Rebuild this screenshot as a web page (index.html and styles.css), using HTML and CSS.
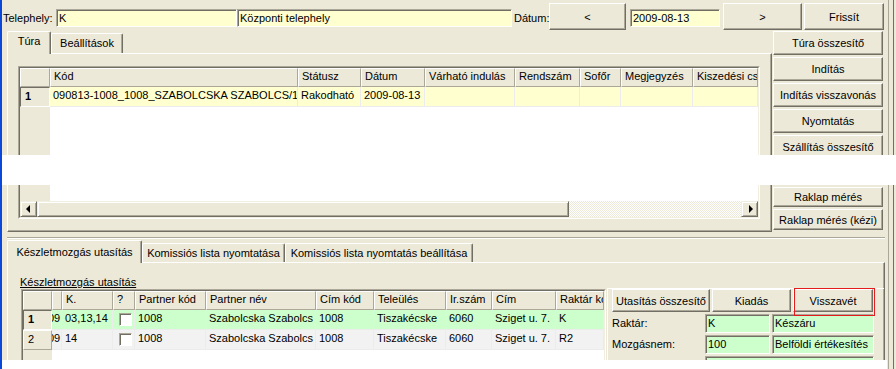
FILE: index.html
```html
<!DOCTYPE html>
<html>

<head>
    <title>Túra kezelés</title>
    <link rel="stylesheet" href="styles.css">
</head>

<body>
    <div class="app">
        <div class="content">

            <div class="topbar">
                <span class="lbl lbl-telephely">Telephely:</span>
                <div class="field yellow w-kod">K</div>
                <div class="field yellow w-nev">Központi telephely</div>
                <span class="lbl lbl-datum">Dátum:</span>
                <div class="btn btn-nav btn-prev">&lt;</div>
                <div class="field yellow w-date">2009-08-13</div>
                <div class="btn btn-nav btn-next">&gt;</div>
                <div class="btn btn-nav btn-refresh">Frissít</div>
            </div>

            <div class="main">
                <div class="left">
                    <div class="tabs">
                        <div class="tab active tab-tura">Túra</div>
                        <div class="tab tab-beall">Beállítások</div>
                    </div>
                    <div class="panel panel-top">
                        <div class="grid grid-tura">
                            <div class="grid-inner">
                                <div class="row head">
                                    <div class="cell t-fix"></div>
                                    <div class="cell t-kod">Kód</div>
                                    <div class="cell t-status">Státusz</div>
                                    <div class="cell t-datum">Dátum</div>
                                    <div class="cell t-indulas">Várható indulás</div>
                                    <div class="cell t-rendszam">Rendszám</div>
                                    <div class="cell t-sofor">Sofőr</div>
                                    <div class="cell t-megj">Megjegyzés</div>
                                    <div class="cell t-kisz">Kiszedési csoport</div>
                                </div>
                                <div class="row data yellow">
                                    <div class="cell fix current t-fix">1</div>
                                    <div class="cell t-kod">090813-1008_1008_SZABOLCSKA SZABOLCS/1</div>
                                    <div class="cell t-status">Rakodható</div>
                                    <div class="cell t-datum">2009-08-13</div>
                                    <div class="cell t-indulas"></div>
                                    <div class="cell t-rendszam"></div>
                                    <div class="cell t-sofor"></div>
                                    <div class="cell t-megj"></div>
                                    <div class="cell t-kisz"></div>
                                </div>
                                <div class="fill fill-tura"></div>
                                <div class="hscroll">
                                    <div class="sb-btn sb-left"></div>
                                    <div class="sb-thumb"></div>
                                    <div class="sb-track"></div>
                                    <div class="sb-btn sb-right"></div>
                                </div>
                            </div>
                        </div>
                    </div>
                </div>

                <div class="side">
                    <div class="btn">Túra összesítő</div>
                    <div class="btn">Indítás</div>
                    <div class="btn">Indítás visszavonás</div>
                    <div class="btn">Nyomtatás</div>
                    <div class="btn">Szállítás összesítő</div>
                    <div class="btn btn-raklap">Raklap mérés</div>
                    <div class="btn btn-kezi">Raklap mérés (kézi)</div>
                </div>
            </div>

            <div class="lower">
                <div class="tabs tabs-lower">
                    <div class="tab active tab-kesz">Készletmozgás utasítás</div>
                    <div class="tab tab-komlista">Komissiós lista nyomtatása</div>
                    <div class="tab tab-komall">Komissiós lista nyomtatás beállítása</div>
                </div>
                <div class="panel panel-lower">
                    <span class="lbl-section">Készletmozgás utasítás</span>
                    <div class="lower-body">
                        <div class="grid grid-kesz">
                            <div class="grid-inner">
                                <div class="row head">
                                    <div class="cell k-fix"></div>
                                    <div class="cell k-part"></div>
                                    <div class="cell k-k">K.</div>
                                    <div class="cell k-q">?</div>
                                    <div class="cell k-pk">Partner kód</div>
                                    <div class="cell k-pn">Partner név</div>
                                    <div class="cell k-ck">Cím kód</div>
                                    <div class="cell k-tel">Teleülés</div>
                                    <div class="cell k-ir">Ir.szám</div>
                                    <div class="cell k-cim">Cím</div>
                                    <div class="cell k-rk">Raktár kód</div>
                                </div>
                                <div class="row data green">
                                    <div class="cell fix current k-fix">1</div>
                                    <div class="cell k-part"><span class="shifted">09</span></div>
                                    <div class="cell k-k">03,13,14</div>
                                    <div class="cell k-q"><span class="chk"></span></div>
                                    <div class="cell k-pk">1008</div>
                                    <div class="cell k-pn">Szabolcska Szabolcs</div>
                                    <div class="cell k-ck">1008</div>
                                    <div class="cell k-tel">Tiszakécske</div>
                                    <div class="cell k-ir">6060</div>
                                    <div class="cell k-cim">Sziget u. 7.</div>
                                    <div class="cell k-rk">K</div>
                                </div>
                                <div class="row data grey">
                                    <div class="cell fix k-fix">2</div>
                                    <div class="cell k-part"><span class="shifted">09</span></div>
                                    <div class="cell k-k">14</div>
                                    <div class="cell k-q"><span class="chk"></span></div>
                                    <div class="cell k-pk">1008</div>
                                    <div class="cell k-pn">Szabolcska Szabolcs</div>
                                    <div class="cell k-ck">1008</div>
                                    <div class="cell k-tel">Tiszakécske</div>
                                    <div class="cell k-ir">6060</div>
                                    <div class="cell k-cim">Sziget u. 7.</div>
                                    <div class="cell k-rk">R2</div>
                                </div>
                                <div class="fill fill-kesz"></div>
                            </div>
                        </div>

                        <div class="rpanel">
                            <div class="rbtns">
                                <div class="btn rb-ossz">Utasítás összesítő</div>
                                <div class="btn rb-kiad">Kiadás</div>
                                <div class="btn rb-vissza focused">Visszavét</div>
                            </div>
                            <div class="frow">
                                <span class="rlbl">Raktár:</span>
                                <div class="field green in-row f-kod">K</div>
                                <div class="field green in-row f-nev">Készáru</div>
                            </div>
                            <div class="frow">
                                <span class="rlbl">Mozgásnem:</span>
                                <div class="field green in-row f-kod">100</div>
                                <div class="field green in-row f-nev">Belföldi értékesítés</div>
                            </div>
                            <div class="frow">
                                <span class="rlbl">Határidő:</span>
                                <div class="field green in-row f-long">2009.08.13. 10:00</div>
                            </div>
                        </div>
                    </div>
                </div>
            </div>

        </div>
        <div class="edge"></div>

        <div class="glitch glitch-mid"></div>
        <div class="glitch glitch-bottom"></div>
    </div>
</body>

</html>
```

FILE: styles.css
```css
* {
    box-sizing: border-box;
}

body {
    margin: 0;
    background-color: #ece9d8;
    font-family: "Liberation Sans", Arial, sans-serif;
    font-size: 11px;
    color: #000000;
}

.app {
    position: relative;
    display: flex;
    width: 896px;
    height: 369px;
    overflow: hidden;
    border-left: 2px solid #0b47d8;
}

.content {
    flex: none;
    width: 883px;
}

.edge {
    flex: 1;
    background: linear-gradient(to right, #ece9d8 3px, #aca899 3px, #aca899 4px, #ece9d8 4px, #ece9d8 8px, #716f64 8px, #716f64 9px, #ece9d8 9px);
}

/* top row */

.topbar {
    display: flex;
    align-items: flex-start;
    height: 31px;
    padding: 3px 0 0 1px;
}

.lbl {
    margin-top: 6px;
    height: 18px;
    line-height: 18px;
    white-space: nowrap;
}

.lbl-telephely {
    width: 53px;
}

.lbl-datum {
    width: 37px;
    padding-left: 2px;
}

.field {
    height: 18px;
    margin-top: 6px;
    line-height: 16px;
    padding-left: 2px;
    border: 1px solid;
    border-color: #aca899 #ffffff #ffffff #aca899;
    box-shadow: inset 1px 1px #716f64;
    white-space: nowrap;
    overflow: hidden;
}

.yellow,
.yellow .cell {
    background-color: #ffffd0;
}

.green,
.green .cell {
    background-color: #ccffcc;
}

.grey .cell {
    background-color: #f2f2f2;
}

.w-kod {
    width: 181px;
}

.w-nev {
    width: 275px;
}

.w-date {
    width: 90px;
    margin-left: 4px;
}

.btn {
    display: flex;
    align-items: center;
    justify-content: center;
    background-color: #ece9d8;
    border: 1px solid;
    border-color: #ffffff #716f64 #716f64 #ffffff;
    box-shadow: inset -1px -1px #aca899;
    white-space: nowrap;
}

.btn-nav {
    height: 27px;
}

.btn-prev {
    width: 77px;
}

.btn-next {
    width: 79px;
    margin-left: 3px;
}

.btn-refresh {
    width: 80px;
    margin-left: 2px;
}

/* upper area */

.main {
    display: flex;
    height: 201px;
}

.left {
    display: flex;
    flex-direction: column;
    width: 765px;
    margin-left: 5px;
}

.tabs {
    display: flex;
    align-items: flex-end;
    flex: none;
    height: 22px;
}

.tab {
    position: relative;
    height: 20px;
    padding-top: 2px;
    line-height: 14px;
    text-align: center;
    white-space: nowrap;
    border: 1px solid;
    border-bottom: none;
    border-color: #ffffff #716f64 #716f64 #ffffff;
    box-shadow: inset -1px 0 #aca899;
    border-radius: 2px 2px 0 0;
}

.tab.active {
    z-index: 1;
    height: 23px;
    margin-bottom: -1px;
    background-color: #ece9d8;
}

.tab-tura {
    width: 44px;
}

.tab-beall {
    width: 72px;
}

.panel {
    border: 1px solid;
    border-color: #ffffff #716f64 #716f64 #ffffff;
    box-shadow: inset -1px -1px #aca899;
}

.panel-top {
    flex: 1;
    padding: 12px 0 0 10px;
}

.grid {
    border: 1px solid;
    border-color: #aca899 #ffffff #ffffff #aca899;
}

.grid-inner {
    display: flex;
    flex-direction: column;
    height: 100%;
    background-color: #ffffff;
    border: 1px solid;
    border-color: #716f64 #f1efe2 #f1efe2 #716f64;
}

.grid-tura {
    width: 742px;
    height: 153px;
}

.row {
    display: flex;
    flex: none;
}

.cell {
    flex: none;
    overflow: hidden;
    white-space: nowrap;
}

.head .cell {
    height: 19px;
    line-height: 15px;
    padding-left: 3px;
    background-color: #ece9d8;
    border: 1px solid;
    border-color: #ffffff #aca899 #aca899 #ffffff;
}

.data .cell {
    height: 20px;
    line-height: 16px;
    padding-left: 3px;
    border-right: 1px solid #ececec;
    border-bottom: 1px solid #ececec;
}

.data .fix {
    padding-left: 4px;
    background-color: #ece9d8;
    border: 1px solid;
    border-color: #ffffff #aca899 #aca899 #ffffff;
}

.data .fix.current {
    font-weight: bold;
    border-color: #716f64 #ffffff #ffffff #716f64;
}

.t-fix { width: 30px; }
.t-kod { width: 248px; }
.t-status { width: 63px; }
.t-datum { width: 64px; }
.t-indulas { width: 90px; }
.t-rendszam { width: 65px; }
.t-sofor { width: 41px; }
.t-megj { width: 72px; }
.t-kisz { width: 65px; }

.fill {
    flex: 1;
}

.fill-tura {
    background: linear-gradient(to right, #ece9d8 30px, #ffffff 30px);
}

.hscroll {
    display: flex;
    flex: none;
    height: 16px;
}

.sb-btn,
.sb-thumb {
    background-color: #ece9d8;
    border: 1px solid;
    border-color: #f1efe2 #716f64 #716f64 #f1efe2;
    box-shadow: inset 1px 1px #ffffff, inset -1px -1px #aca899;
}

.sb-btn {
    position: relative;
    width: 17px;
}

.sb-btn::before {
    content: "";
    position: absolute;
    top: 3px;
    border-top: 4px solid transparent;
    border-bottom: 4px solid transparent;
}

.sb-left::before {
    left: 5px;
    border-right: 4px solid #000000;
}

.sb-right::before {
    left: 7px;
    border-left: 4px solid #000000;
}

.sb-thumb {
    width: 532px;
}

.sb-track {
    flex: 1;
    background: repeating-conic-gradient(#ffffff 0 25%, #ece9d8 0 50%) 0 0 / 2px 2px;
}

.side {
    display: flex;
    flex-direction: column;
    width: 110px;
    margin-left: 1px;
    padding-bottom: 2px;
}

.side .btn {
    flex: none;
    height: 24px;
    margin-bottom: 2px;
}

.side .btn-raklap {
    margin-top: auto;
    height: 20px;
}

.side .btn-kezi {
    height: 21px;
    margin-bottom: 0;
}

/* lower area */

.lower {
    width: 878px;
    margin: 5px 0 0 5px;
    padding-top: 2px;
    border-top: 1px solid #aca899;
    box-shadow: inset 0 1px #ffffff;
}

.tabs-lower .tab {
    height: 19px;
}

.tabs-lower .tab.active {
    height: 23px;
    padding-top: 4px;
}

.tab-kesz {
    width: 135px;
}

.tab-komlista {
    width: 143px;
}

.tab-komall {
    width: 188px;
}

.panel-lower {
    height: 120px;
    padding: 12px 0 0 13px;
}

.lbl-section {
    display: block;
    height: 14px;
    margin-left: -1px;
    line-height: 14px;
    text-decoration: underline;
}

.lower-body {
    display: flex;
    align-items: flex-start;
}

.grid-kesz {
    flex: none;
    width: 585px;
    height: 110px;
}

.k-fix { width: 29px; }
.k-part { width: 10px; }
.k-k { width: 51px; }
.k-q { width: 22px; }
.k-pk { width: 71px; }
.k-pn { width: 110px; }
.k-ck { width: 58px; }
.k-tel { width: 72px; }
.k-ir { width: 46px; }
.k-cim { width: 64px; }
.k-rk { width: 48px; }

.data .k-part {
    padding-left: 0;
}

.shifted {
    display: inline-block;
    margin-left: -4px;
}

.chk {
    display: block;
    width: 13px;
    height: 13px;
    margin: 3px 0 0 3px;
    background-color: #ffffff;
    border: 1px solid;
    border-color: #aca899 #ffffff #ffffff #aca899;
    box-shadow: inset 1px 1px #716f64;
}

.fill-kesz {
    background: linear-gradient(to right, #ece9d8 29px, #ffffff 29px);
}

.rpanel {
    width: 277px;
    height: 100px;
    margin: -1px 0 0 1px;
    padding: 0 0 0 4px;
    border-top: 1px solid #ffffff;
    border-left: 1px solid #ffffff;
}

.rbtns {
    display: flex;
    gap: 2px;
}

.rbtns .btn {
    height: 23px;
}

.rb-ossz {
    width: 98px;
}

.rb-kiad {
    width: 79px;
}

.rb-vissza {
    width: 80px;
}

.focused {
    position: relative;
}

.focused::after {
    content: "";
    position: absolute;
    top: -2px;
    left: 0;
    right: -3px;
    bottom: -5px;
    border: 1px solid #e51c1c;
}

.frow {
    display: flex;
    margin-top: 2px;
    height: 19px;
}

.rlbl {
    width: 93px;
    line-height: 19px;
    white-space: nowrap;
}

.field.in-row {
    height: 19px;
    margin-top: 0;
    line-height: 17px;
}

.f-kod {
    width: 65px;
}

.f-nev {
    width: 102px;
    margin-left: 2px;
}

.f-long {
    width: 169px;
}

/* blank bands over the capture */

.glitch {
    position: absolute;
    background-color: #ffffff;
}

.glitch-mid {
    top: 155px;
    left: 0;
    right: 0;
    height: 30px;
}

.glitch-bottom {
    top: 360px;
    left: -2px;
    right: 9px;
    height: 9px;
}
```
